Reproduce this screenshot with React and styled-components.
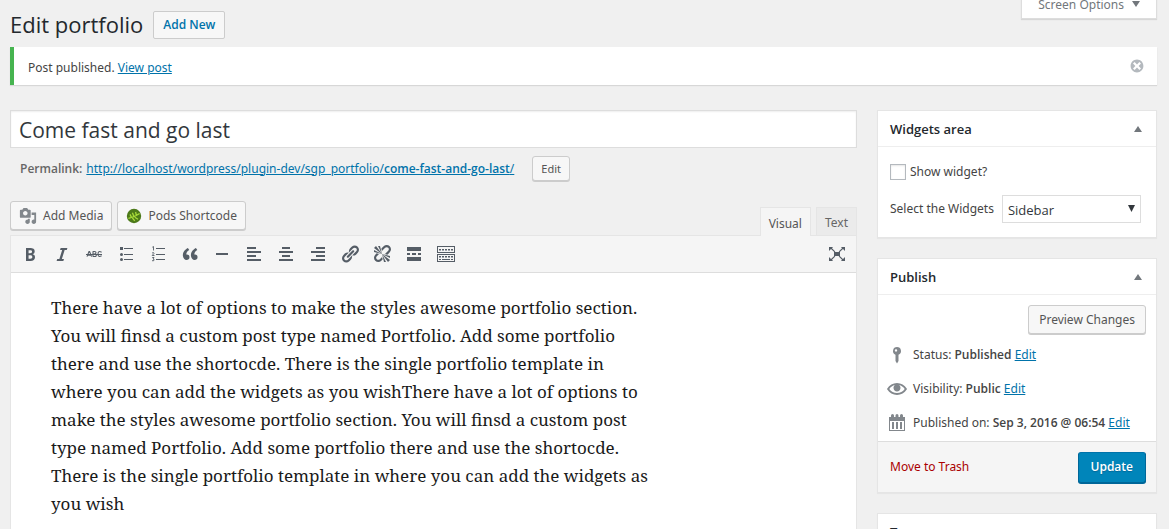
import React from "react";
import styled, { createGlobalStyle, css } from "styled-components";

const ui = `"Noto Sans", "Open Sans", sans-serif`;
const heading = `"Open Sans", "Noto Sans", sans-serif`;

const GlobalStyle = createGlobalStyle`
  *, *::before, *::after { box-sizing: border-box; }
  html, body { margin: 0; height: 100%; overflow: hidden; }
  body {
    background: #f0f0f0;
    color: #444;
    font: 12px/20px ${ui};
  }
  h1, h2, p { margin: 0; }
  b, strong { font-family: ${heading}; font-weight: 600; }
  button, input, select { font-family: inherit; margin: 0; }
`;

const Page = styled.div`
  padding: 0 12px 0 10px;
`;

const TopBar = styled.header`
  display: flex;
  align-items: flex-start;
  height: 47px;
`;

const Title = styled.h1`
  font: 400 22px/28px ${heading};
  color: #23282d;
  padding: 10px 10px 0 0;
`;

const AddNew = styled.a`
  margin-top: 11px;
  padding: 3px 9px;
  border: 1px solid #ccc;
  border-radius: 2px;
  background: #f7f7f7;
  color: #0073aa;
  font-family: ${heading};
  font-weight: 600;
  text-decoration: none;
`;

const ScreenOptions = styled.button`
  display: flex;
  align-items: center;
  gap: 8px;
  margin: -10px 0 0 auto;
  height: 29px;
  padding: 0 16px;
  border: 1px solid #ddd;
  border-top: 0;
  background: #fff;
  color: #72777c;
  font-size: 12px;
  box-shadow: 0 1px 1px rgba(0, 0, 0, 0.1);
`;

const Notice = styled.div`
  display: flex;
  align-items: center;
  justify-content: space-between;
  height: 38px;
  padding: 0 12px 0 14px;
  border-left: 4px solid #46b450;
  background: #fff;
  box-shadow: 0 1px 1px rgba(0, 0, 0, 0.1);
  p { padding-top: 4px; }
`;

const IconButton = styled.button`
  display: grid;
  place-items: center;
  width: ${(p) => p.$size || 20}px;
  height: ${(p) => p.$size || 20}px;
  padding: 0;
  border: 0;
  background: none;
  color: ${(p) => p.$color || "#555d66"};
`;

const Link = styled.a`
  color: #0073aa;
`;

const Columns = styled.div`
  display: flex;
  gap: 20px;
  padding-top: 25px;
`;

const Main = styled.main`
  flex: 1;
  min-width: 0;
`;

const Side = styled.aside`
  flex: 0 0 280px;
`;

const TitleInput = styled.input`
  display: block;
  width: 100%;
  height: 38px;
  padding: 2px 8px 0;
  border: 1px solid #ddd;
  background: #fff;
  color: #32373c;
  font: 21px/28px ${heading};
  box-shadow: inset 0 1px 2px rgba(0, 0, 0, 0.07);
`;

const Permalink = styled.div`
  display: flex;
  align-items: center;
  gap: 4px;
  padding: 8px 10px 0;
  color: #666;
`;

const PermalinkUrl = styled.span`
  min-width: 442px;
`;

const Button = styled.button`
  display: inline-flex;
  align-items: center;
  gap: 6px;
  height: ${(p) => (p.$small ? 25 : 29)}px;
  padding: 0 ${(p) => (p.$small || p.$icon ? 8 : 10)}px;
  border: 1px solid #ccc;
  border-radius: 3px;
  background: #f7f7f7;
  color: #555;
  font-size: ${(p) => (p.$small ? 11 : 12)}px;
  line-height: 20px;
  white-space: nowrap;
  box-shadow: 0 1px 0 #ccc;
  ${(p) =>
    p.$primary &&
    css`
      height: 31px;
      padding: 0 12px;
      border-color: #0073aa #006799 #006799;
      background: #0085ba;
      color: #fff;
      font-family: ${heading};
      font-weight: 600;
      box-shadow: 0 1px 0 #006799;
      text-shadow: 0 1px 1px #006799;
    `}
`;

const EditorTools = styled.div`
  display: flex;
  justify-content: space-between;
  align-items: flex-end;
  height: 54px;
`;

const MediaButtons = styled.div`
  display: flex;
  gap: 5px;
  padding-bottom: 5px;
`;

const Tabs = styled.div`
  display: flex;
  align-items: flex-end;
  gap: 5px;
`;

const Tab = styled.button`
  position: relative;
  height: ${(p) => (p.$active ? 29 : 28)}px;
  margin-bottom: ${(p) => (p.$active ? -1 : 0)}px;
  padding: 2px 8px 0;
  border: 1px solid #e5e5e5;
  border-bottom: 0;
  background: ${(p) => (p.$active ? "#f5f5f5" : "#ebebeb")};
  color: ${(p) => (p.$active ? "#555" : "#666")};
  font-size: 12px;
`;

const Editor = styled.section`
  border: 1px solid #e5e5e5;
  background: #fff;
`;

const Toolbar = styled.div`
  display: flex;
  align-items: center;
  gap: 12px;
  height: 37px;
  padding: 0 9px;
  border-bottom: 1px solid #ddd;
  background: #f5f5f5;
  & > :last-child { margin-left: auto; }
`;

const Content = styled.div`
  min-height: 320px;
  padding: 21px 40px;
  color: #1a1a1a;
  font: 17px/28px "Noto Serif", "DejaVu Serif Condensed", "DejaVu Serif", serif;
  white-space: nowrap;
`;

const Panel = styled.section`
  margin-bottom: 20px;
  border: 1px solid #e5e5e5;
  background: #fff;
  box-shadow: 0 1px 1px rgba(0, 0, 0, 0.04);
`;

const PanelHead = styled.div`
  display: flex;
  align-items: center;
  justify-content: space-between;
  height: 36px;
  padding: 0 10px 0 12px;
  border-bottom: 1px solid #eee;
`;

const PanelTitle = styled.h2`
  color: #23282d;
  font: 600 13px/20px ${heading};
`;

const WidgetBody = styled.div`
  padding: 15px 12px 14px;
`;

const CheckRow = styled.label`
  display: flex;
  align-items: center;
  gap: 4px;
  height: 20px;
`;

const Checkbox = styled.input`
  appearance: none;
  width: 16px;
  height: 16px;
  border: 1px solid #b4b9be;
  background: #fff;
  box-shadow: inset 0 1px 2px rgba(0, 0, 0, 0.1);
`;

const SelectRow = styled.div`
  display: flex;
  align-items: center;
  gap: 8px;
  margin-top: 13px;
`;

const SelectWrap = styled.div`
  position: relative;
  flex: 0 0 139px;
  svg { position: absolute; right: 6px; top: 10px; pointer-events: none; }
`;

const Select = styled.select`
  appearance: none;
  display: block;
  width: 100%;
  height: 28px;
  padding: 2px 5px 0;
  border: 1px solid #ddd;
  border-radius: 0;
  background: #fff;
  color: #32373c;
  font: 13px/20px ${heading};
`;

const PreviewRow = styled.div`
  display: flex;
  justify-content: flex-end;
  padding: 10px 10px 0;
`;

const StatusList = styled.div`
  padding: 4px 9px 1px;
`;

const StatusRow = styled.div`
  display: flex;
  align-items: center;
  gap: 6px;
  height: 34px;
  color: #444;
  white-space: nowrap;
  svg { color: #82878c; flex: none; }
`;

const PanelFoot = styled.footer`
  display: flex;
  align-items: center;
  justify-content: space-between;
  height: 51px;
  padding: 0 10px 0 12px;
  border-top: 1px solid #ddd;
  background: #f5f5f5;
`;

const Trash = styled.a`
  color: #a00;
  text-decoration: none;
`;

const Svg = ({ size = 20, children, ...rest }) => (
  <svg width={size} height={size} viewBox="0 0 20 20" fill="currentColor" aria-hidden="true" {...rest}>
    {children}
  </svg>
);

const Triangle = ({ up, color = "#72777c", w = 8, h = 6 }) => (
  <svg width={w} height={h} viewBox="0 0 8 6" preserveAspectRatio="none" fill={color} aria-hidden="true">
    <path d={up ? "M4 0L8 6H0z" : "M0 0H8L4 6z"} />
  </svg>
);

const linkPath =
  "M17.74 2.76c1.68 1.69 1.68 4.41 0 6.1l-1.53 1.52c-1.12 1.12-2.7 1.47-4.14 1.09l2.62-2.61.76-.77.76-.76c.84-.84.84-2.2 0-3.04-.84-.85-2.2-.85-3.04 0l-.77.76-3.38 3.38c-.37-1.44-.02-3.02 1.1-4.14l1.52-1.53c1.69-1.68 4.42-1.68 6.1 0zM8.59 13.43l5.34-5.34c.42-.42.42-1.1 0-1.52-.44-.43-1.13-.39-1.53 0l-5.33 5.34c-.42.42-.42 1.1 0 1.52.44.43 1.13.39 1.52 0zm-.76 2.29l4.14-4.15c.38 1.44.03 3.02-1.09 4.14l-1.52 1.53c-1.69 1.68-4.41 1.68-6.1 0-1.68-1.68-1.68-4.42 0-6.1l1.53-1.52c1.12-1.12 2.7-1.47 4.14-1.1l-4.14 4.15c-.85.84-.85 2.2 0 3.05.84.84 2.2.84 3.04 0z";

const tools = [
  ["Bold", <path key="p" d="M6 4v13h4.54c1.37 0 2.46-.33 3.26-1 .8-.66 1.2-1.58 1.2-2.77 0-.84-.17-1.51-.51-2.01s-.9-.85-1.67-1.03v-.09c.57-.1 1.02-.4 1.36-.9s.51-1.13.51-1.91c0-1.14-.39-1.98-1.17-2.5C12.75 4.26 11.5 4 9.78 4H6zm2.57 5.15V6.26h1.36c.73 0 1.27.11 1.61.32.34.22.51.58.51 1.07 0 .54-.16.92-.47 1.15s-.82.35-1.51.35h-1.5zm0 2.19h1.6c1.44 0 2.16.53 2.16 1.6 0 .61-.17 1.05-.51 1.34s-.86.43-1.57.43H8.57v-3.37z" />],
  ["Italic", <path key="p" d="M14.78 6h-2.13l-2.8 9h2.12l-.62 2H4.6l.62-2h2.14l2.8-9H8.03l.62-2h6.75z" />],
  ["Strikethrough", <g key="p" fill="none" stroke="currentColor" strokeWidth="1.1"><path d="M3 12.600l2-5h.6l2 5M3.700 11.300H7M9 7.300v5.400M9 7.500h1.600q1.400 0 1.400 1.200T10.600 10H9h1.800q1.500 0 1.500 1.300T10.800 12.500H9M17.600 8.200q-3.600-2-3.600 1.800t3.600 1.800" /><path d="M2 10.500h16" strokeWidth="1" /></g>],
  ["Bulleted list", <path key="p" d="M4 3h3v3H4zM8 4h9v1H8zM5.500 12a1.500 1.500 0 1 1 0-3 1.500 1.500 0 0 1 0 3zM8 10h9v1H8zM5.500 17a1.500 1.500 0 1 1 0-3 1.500 1.500 0 0 1 0 3zM8 15h9v1H8z" />],
  ["Numbered list", <g key="p"><path d="M8 4h9v1H8zM8 10h9v1H8zM8 15h9v1H8z" /><path fill="none" stroke="currentColor" strokeWidth=".9" d="M4.300 3.200l1.200-.7V6.500M4 9q2.200-1 2 .4L4.200 11.500H6.500M4.200 13.500H6L5 15q1.700.2 1 1.400-.8.800-2 .2" /></g>],
  ["Quote", <path key="p" d="M9.490 13.220c0-.74-.2-1.380-.61-1.900-.62-.78-1.830-.88-2.530-.72-.29-1.650 1.110-3.750 2.920-4.650L7.880 4c-2.730 1.300-5.420 4.280-4.960 8.050C3.210 14.430 4.590 16 6.540 16c.85 0 1.560-.25 2.120-.75s.83-1.180.83-2.030zm8.050 0c0-.74-.2-1.380-.61-1.900-.63-.78-1.830-.88-2.530-.72-.29-1.650 1.110-3.750 2.920-4.650L15.930 4c-2.730 1.300-5.410 4.280-4.950 8.050.29 2.380 1.660 3.950 3.610 3.950.85 0 1.560-.25 2.120-.75s.83-1.180.83-2.030z" />],
  ["Horizontal line", <path key="p" d="M4 9h12v2H4z" />],
  ["Align left", <path key="p" d="M12 5V3H3v2h9zm5 4V7H3v2h14zm-5 4v-2H3v2h9zm5 4v-2H3v2h14z" />],
  ["Align center", <path key="p" d="M14 5V3H6v2h8zm3 4V7H3v2h14zm-3 4v-2H6v2h8zm3 4v-2H3v2h14z" />],
  ["Align right", <path key="p" d="M17 5V3H8v2h9zm0 4V7H3v2h14zm0 4v-2H8v2h9zm0 4v-2H3v2h14z" />],
  ["Insert link", <path key="p" d={linkPath} />],
  ["Remove link", <g key="p"><path d="M17.740 2.260c1.680 1.690 1.680 4.410 0 6.100l-1.530 1.520c-.32.33-.69.58-1.080.77L13 10l1.690-1.640.76-.77.76-.76c.84-.84.84-2.200 0-3.040-.84-.85-2.200-.85-3.040 0l-.77.76-.76.760L10 7l-.65-2.140c.19-.38.44-.75.77-1.070l1.520-1.530c1.690-1.680 4.420-1.680 6.100 0zM2 4l8 6-6-8zm4-2l4 8-2-8H6zM2 6l8 4-8-2V6zm7.360 7.690L10 13l.74 2.350-1.380 1.390c-1.690 1.680-4.410 1.680-6.100 0-1.680-1.680-1.680-4.420 0-6.100l1.390-1.380L7 10l-.69.640-1.520 1.530c-.85.84-.85 2.200 0 3.040.84.85 2.200.85 3.040 0zM18 16l-8-6 6 8zm-4 2l-4-8 2 8h2zm4-4l-8-4 8 2v2z" /></g>],
  ["Read more", <path key="p" d="M3 3h14v4H3zM3 9h3v2H3zM8 9h4v2H8zM14 9h3v2h-3zM3 13h14v4H3z" />],
  ["Toolbar toggle", <path key="p" fillRule="evenodd" d="M1 2h18v7H1zM2 3v5h16V3zM3 5h2v1.500H3zM6 5h2v1.500H6zM9 5h2v1.500H9zM12 5h2v1.500h-2zM15 5h2v1.500h-2zM1 10h18v8H1zM2 11v6h16v-6zM3 12h2v1.500H3zM6 12h2v1.500H6zM9 12h2v1.500H9zM12 12h2v1.500h-2zM15 12h2v1.500h-2zM3 15h2v1H3zM6 15h8v1H6zM15 15h2v1h-2z" />],
  ["Distraction-free mode", <path key="p" d="M7 8h6v4H7zM2 3h4L5 4.200l3.300 3.300-.8.800L4 5 2 7zM18 3v4l-2-2-3.500 3.300-.8-.8L15 4.200 14 3zM2 17v-4l2 2 3.500-3.300.8.800L5 15.800 6 17zM18 17h-4l1-1.200-3.300-3.300.8-.8L16 15l2-2z" />],
];

const lines = [
  "There have a lot of options to make the styles awesome portfolio section.",
  "You will finsd a custom post type named Portfolio. Add some portfolio",
  "there and use the shortocde. There is the single portfolio template in",
  "where you can add the widgets as you wishThere have a lot of options to",
  "make the styles awesome portfolio section. You will finsd a custom post",
  "type named Portfolio. Add some portfolio there and use the shortocde.",
  "There is the single portfolio template in where you can add the widgets as",
  "you wish",
];

const PanelHeader = ({ title }) => (
  <PanelHead>
    <PanelTitle>{title}</PanelTitle>
    <IconButton $size={16} aria-label={`Toggle panel: ${title}`}><Triangle up /></IconButton>
  </PanelHead>
);

export default function App() {
  return (
    <>
      <GlobalStyle />
      <Page>
        <TopBar>
          <Title>Edit portfolio</Title>
          <AddNew href="#new">Add New</AddNew>
          <ScreenOptions>Screen Options <Triangle /></ScreenOptions>
        </TopBar>
        <Notice>
          <p>Post published. <Link href="#view">View post</Link></p>
          <IconButton $size={16} $color="#b4b9be" aria-label="Dismiss this notice">
            <Svg size={16}><path d="M10 2c4.420 0 8 3.580 8 8s-3.580 8-8 8-8-3.580-8-8 3.580-8 8-8zm5 11l-3-3 3-3-2-2-3 3-3-3-2 2 3 3-3 3 2 2 3-3 3 3z" /></Svg>
          </IconButton>
        </Notice>
        <Columns>
          <Main>
            <TitleInput aria-label="Title" defaultValue="Come fast and go last" />
            <Permalink>
              <strong>Permalink:</strong>
              <PermalinkUrl>
                <Link href="#permalink">http://localhost/wordpress/plugin-dev/sgp_portfolio/<b>come-fast-and-go-last</b>/</Link>
              </PermalinkUrl>
              <Button $small>Edit</Button>
            </Permalink>
            <EditorTools>
              <MediaButtons>
                <Button $icon>
                  <Svg size={18} color="#82878c"><path d="M13 11V4c0-.55-.45-1-1-1h-1.670L9 1H5L3.670 3H2c-.55 0-1 .45-1 1v7c0 .55.45 1 1 1h10c.55 0 1-.45 1-1zM7 4.500c1.380 0 2.500 1.120 2.500 2.500S8.380 9.500 7 9.500 4.500 8.380 4.500 7 5.620 4.500 7 4.500zM14 6h5v10.500c0 1.380-1.120 2.500-2.500 2.500S14 17.880 14 16.500s1.120-2.500 2.500-2.500c.17 0 .34.020.5.050V9h-3V6zm-4 8.050V13h2v3.500c0 1.380-1.120 2.500-2.500 2.500S7 17.880 7 16.500 8.120 14 9.500 14c.17 0 .34.020.5.050z" /></Svg>
                  Add Media
                </Button>
                <Button $icon>
                  <Svg size={16}>
                    <circle cx="10" cy="10" r="9" fill="#4d7a1a" />
                    <path d="M3 13Q10 12 17 7M7 12L5 8M10 11L8 6M13 9.500L12 5M8 12.500l3 3.500M11 11.500l4 2.500" stroke="#a9dc3a" strokeWidth="1.600" fill="none" />
                  </Svg>
                  Pods Shortcode
                </Button>
              </MediaButtons>
              <Tabs>
                <Tab $active>Visual</Tab>
                <Tab>Text</Tab>
              </Tabs>
            </EditorTools>
            <Editor>
              <Toolbar>
                {tools.map(([name, art]) => (
                  <IconButton key={name} aria-label={name}><Svg>{art}</Svg></IconButton>
                ))}
              </Toolbar>
              <Content>
                {lines.map((line, i) => (
                  <React.Fragment key={i}>{line}<br /></React.Fragment>
                ))}
              </Content>
            </Editor>
          </Main>
          <Side>
            <Panel>
              <PanelHeader title="Widgets area" />
              <WidgetBody>
                <CheckRow><Checkbox type="checkbox" />Show widget?</CheckRow>
                <SelectRow>
                  <label htmlFor="widgets">Select the Widgets</label>
                  <SelectWrap>
                    <Select id="widgets"><option>Sidebar</option></Select>
                    <Triangle color="#32373c" w={7} h={7} />
                  </SelectWrap>
                </SelectRow>
              </WidgetBody>
            </Panel>
            <Panel>
              <PanelHeader title="Publish" />
              <PreviewRow><Button>Preview Changes</Button></PreviewRow>
              <StatusList>
                <StatusRow>
                  <Svg><path fillRule="evenodd" d="M10 2a4 4 0 0 1 1.500 7.700V16L10 18.500 8.500 16V9.700A4 4 0 0 1 10 2zM9 4.200a1.200 1.200 0 1 0 0 2.400 1.200 1.200 0 0 0 0-2.400z" /></Svg>
                  <span>Status: <b>Published</b> <Link href="#status">Edit</Link></span>
                </StatusRow>
                <StatusRow>
                  <Svg><path d="M19.700 9.400C17.700 6 14 3.900 10 3.900S2.300 6 .3 9.400L0 10l.3.6c2 3.400 5.700 5.500 9.700 5.500s7.700-2.100 9.700-5.500l.3-.6-.3-.6zM10 14.100c-3.100 0-6-1.600-7.700-4.100C3.600 8 5.700 6.600 8 6.100c-.9.6-1.500 1.700-1.500 2.900 0 1.900 1.600 3.500 3.500 3.500s3.500-1.600 3.500-3.500c0-1.200-.6-2.300-1.500-2.900 2.300.5 4.400 1.900 5.700 3.900-1.700 2.500-4.600 4.100-7.700 4.100z" /><circle cx="9" cy="8" r="1.300" /></Svg>
                  <span>Visibility: <b>Public</b> <Link href="#visibility">Edit</Link></span>
                </StatusRow>
                <StatusRow>
                  <Svg><path fillRule="evenodd" d="M2 4h2V2.500a1.500 1.500 0 0 1 3 0V4h1.500V2.500a1.500 1.500 0 0 1 3 0V4H13V2.500a1.500 1.500 0 0 1 3 0V4h2v14H2zM3 8v9h14V8zM5 9h2v7H5zM9 9h2v7H9zM13 9h2v7h-2z" /></Svg>
                  <span>Published on: <b>Sep 3, 2016 @ 06:54</b> <Link href="#date">Edit</Link></span>
                </StatusRow>
              </StatusList>
              <PanelFoot>
                <Trash href="#trash">Move to Trash</Trash>
                <Button $primary>Update</Button>
              </PanelFoot>
            </Panel>
            <Panel>
              <PanelHeader title="Types" />
            </Panel>
          </Side>
        </Columns>
      </Page>
    </>
  );
}
